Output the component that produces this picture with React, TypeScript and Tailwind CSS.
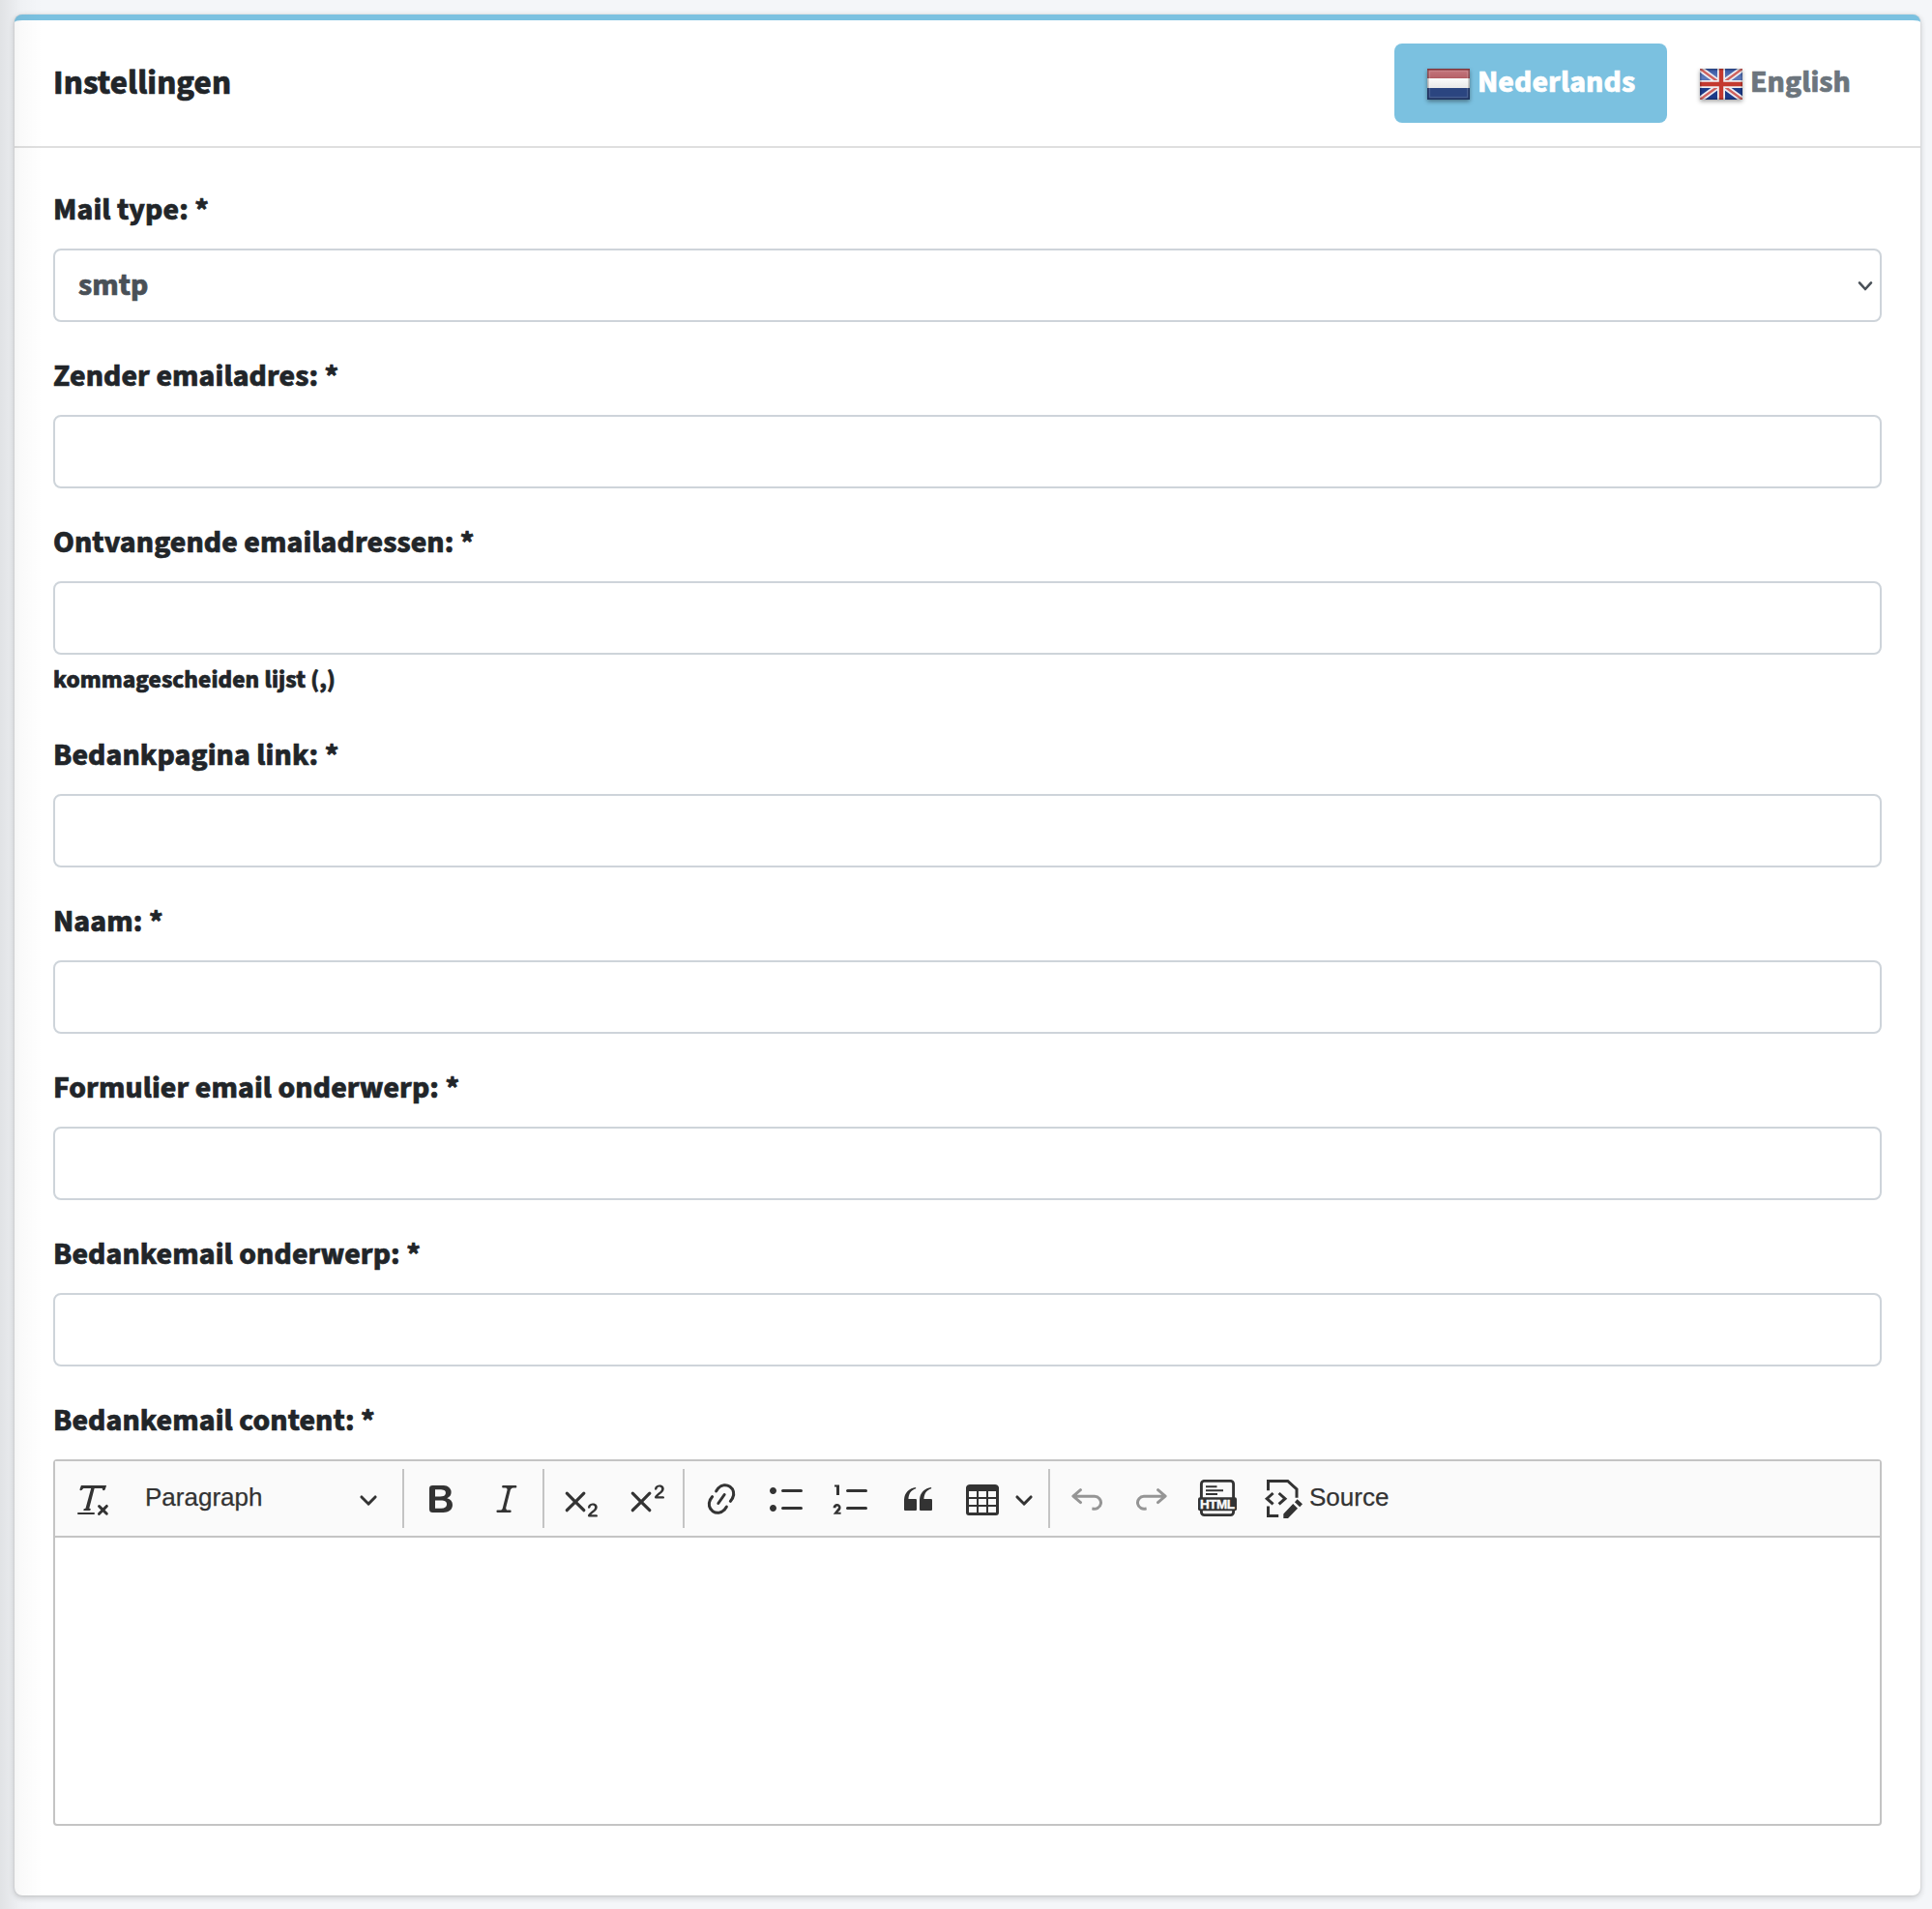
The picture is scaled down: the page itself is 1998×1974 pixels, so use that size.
import type { ReactNode } from "react";

const ICONS = {
  removeFormat:
    "M8.69 14.915c.053.052.173.083.36.093a.366.366 0 0 1 .345.485l-.003.01a.738.738 0 0 1-.697.497h-2.67a.374.374 0 0 1-.353-.496l.013-.038a.681.681 0 0 1 .644-.458c.197-.012.325-.043.386-.093a.28.28 0 0 0 .072-.11L9.592 4.5H6.269c-.359-.017-.609.013-.75.09-.142.078-.289.265-.442.563-.192.29-.516.464-.864.464H4.17a.43.43 0 0 1-.407-.569L4.46 3h13.08l-.62 2.043a.81.81 0 0 1-.775.574h-.114a.486.486 0 0 1-.486-.486c.001-.284-.054-.464-.167-.54-.112-.076-.367-.106-.766-.091h-3.28l-2.68 10.257c-.006.074.007.127.038.158zM3 17h8a.5.5 0 1 1 0 1H3a.5.5 0 1 1 0-1zm11.299 1.17a.75.75 0 1 1-1.06-1.06l1.414-1.415-1.415-1.414a.75.75 0 0 1 1.06-1.06l1.415 1.414 1.414-1.415a.75.75 0 1 1 1.06 1.06l-1.413 1.415 1.414 1.415a.75.75 0 0 1-1.06 1.06l-1.415-1.414-1.414 1.414z",
  bold: "M10.187 17H5.773c-.637 0-1.092-.138-1.364-.415-.273-.277-.409-.718-.409-1.323V4.738c0-.617.14-1.062.419-1.332.279-.27.73-.406 1.354-.406h4.68c.69 0 1.288.041 1.793.124.506.083.96.242 1.36.478.341.197.644.447.906.75a3.262 3.262 0 0 1 .808 2.162c0 1.401-.722 2.426-2.167 3.075C15.05 10.175 16 11.315 16 13.01a3.756 3.756 0 0 1-2.296 3.504 6.1 6.1 0 0 1-1.517.377c-.571.073-1.238.11-2 .11zm-.217-6.217H7v4.087h3.069c1.977 0 2.965-.69 2.965-2.072 0-.707-.256-1.22-.768-1.537-.512-.319-1.277-.478-2.296-.478zM7 5.13v3.619h2.606c.729 0 1.292-.067 1.69-.2a1.6 1.6 0 0 0 .91-.765c.165-.267.247-.566.247-.897 0-.707-.26-1.176-.778-1.409-.519-.232-1.31-.348-2.375-.348H7z",
  italic:
    "m9.586 14.633.021.004c-.036.335.095.655.393.962.082.083.173.15.274.201h1.474a.6.6 0 1 1 0 1.2H5.304a.6.6 0 0 1 0-1.2h1.15c.474-.07.809-.182 1.005-.334.157-.122.291-.32.404-.597l2.416-9.55a1.053 1.053 0 0 0-.281-.823 1.12 1.12 0 0 0-.442-.296H8.15a.6.6 0 0 1 0-1.2h6.443a.6.6 0 1 1 0 1.2h-1.195c-.376.056-.65.155-.823.296-.215.175-.423.439-.623.79l-2.366 9.347z",
  subscript:
    "m7.03 10.349 3.818-3.819a.8.8 0 1 1 1.132 1.132L8.16 11.48l3.819 3.818a.8.8 0 1 1-1.132 1.132L7.03 12.61l-3.818 3.82a.8.8 0 1 1-1.132-1.132L5.9 11.48 2.08 7.662A.8.8 0 1 1 3.212 6.53l3.818 3.82zm8.147 7.829h2.549c.254 0 .447.05.58.152a.49.49 0 0 1 .201.413.54.54 0 0 1-.159.393c-.105.108-.266.162-.48.162h-3.594c-.245 0-.435-.066-.572-.197a.621.621 0 0 1-.205-.463c0-.114.044-.265.132-.453a1.62 1.62 0 0 1 .288-.444c.433-.436.824-.81 1.172-1.122.348-.312.597-.517.747-.615.267-.183.49-.368.667-.553.177-.185.312-.375.405-.57.093-.194.139-.384.139-.57a1.008 1.008 0 0 0-.554-.917 1.197 1.197 0 0 0-.56-.133c-.426 0-.761.182-1.005.546a2.332 2.332 0 0 0-.164.39 1.609 1.609 0 0 1-.258.488c-.096.114-.237.17-.423.17a.558.558 0 0 1-.405-.156.568.568 0 0 1-.161-.427c0-.218.05-.446.151-.683.101-.238.252-.453.452-.646s.454-.349.762-.467a2.998 2.998 0 0 1 1.081-.178c.498 0 .923.076 1.274.228a1.916 1.916 0 0 1 1.004 1.032 1.984 1.984 0 0 1-.156 1.794c-.2.32-.405.572-.613.754-.208.182-.558.468-1.048.857-.49.39-.826.691-1.008.906a2.703 2.703 0 0 0-.24.309z",
  superscript:
    "m7.03 10.349 3.818-3.819a.8.8 0 1 1 1.132 1.132L8.16 11.48l3.819 3.818a.8.8 0 1 1-1.132 1.132L7.03 12.61l-3.818 3.82a.8.8 0 1 1-1.132-1.132L5.9 11.48 2.08 7.662A.8.8 0 1 1 3.212 6.53l3.818 3.82zm8.647-1.671h2.549c.254 0 .447.05.58.152a.49.49 0 0 1 .201.413.54.54 0 0 1-.159.393c-.105.108-.266.162-.48.162h-3.594c-.245 0-.435-.066-.572-.197a.621.621 0 0 1-.205-.463c0-.114.044-.265.132-.453a1.62 1.62 0 0 1 .288-.444c.433-.436.824-.81 1.172-1.122.348-.312.597-.517.747-.615.267-.183.49-.368.667-.553.177-.185.312-.375.405-.57.093-.194.139-.384.139-.57a1.008 1.008 0 0 0-.554-.917 1.197 1.197 0 0 0-.56-.133c-.426 0-.761.182-1.005.546a2.332 2.332 0 0 0-.164.39 1.609 1.609 0 0 1-.258.488c-.096.114-.237.17-.423.17a.558.558 0 0 1-.405-.156.568.568 0 0 1-.161-.427c0-.218.05-.446.151-.683.101-.238.252-.453.452-.646s.454-.349.762-.467a2.998 2.998 0 0 1 1.081-.178c.498 0 .923.076 1.274.228a1.916 1.916 0 0 1 1.004 1.032 1.984 1.984 0 0 1-.156 1.794c-.2.32-.405.572-.613.754-.208.182-.558.468-1.048.857-.49.39-.826.691-1.008.906a2.703 2.703 0 0 0-.24.309z",
  link: "m11.077 15 .991-1.416a.75.75 0 1 1 1.229.86l-1.148 1.64a.748.748 0 0 1-.217.206 5.251 5.251 0 0 1-8.503-5.955.741.741 0 0 1 .12-.274l1.147-1.639a.75.75 0 1 1 1.228.86L4.933 10.7l.006.003a3.75 3.75 0 0 0 6.132 4.294l.006.004zm5.494-5.335a.748.748 0 0 1-.12.274l-1.147 1.639a.75.75 0 1 1-1.228-.86l.86-1.23a3.75 3.75 0 0 0-6.144-4.301l-.86 1.229a.75.75 0 0 1-1.229-.86l1.148-1.64a.748.748 0 0 1 .217-.206 5.251 5.251 0 0 1 8.503 5.955zm-4.563-2.532a.75.75 0 0 1 .184 1.045l-3.155 4.505a.75.75 0 1 1-1.229-.86l3.155-4.506a.75.75 0 0 1 1.045-.184z",
  bulletedList:
    "M7 5.75c0 .414.336.75.75.75h9.5a.75.75 0 1 0 0-1.5h-9.5a.75.75 0 0 0-.75.75zm-6 0C1 4.784 1.777 4 2.75 4c.966 0 1.75.777 1.75 1.75 0 .966-.777 1.75-1.75 1.75C1.784 7.5 1 6.723 1 5.75zm6 9c0 .414.336.75.75.75h9.5a.75.75 0 1 0 0-1.5h-9.5a.75.75 0 0 0-.75.75zm-6 0c0-.966.777-1.75 1.75-1.75.966 0 1.75.777 1.75 1.75 0 .966-.777 1.75-1.75 1.75-.966 0-1.75-.777-1.75-1.75z",
  numberedList:
    "M7 5.75c0 .414.336.75.75.75h9.5a.75.75 0 1 0 0-1.5h-9.5a.75.75 0 0 0-.75.75zM3.5 3v5H2V3.7H1v-1h2.5V3zM.343 17.857l2.59-3.257H2.92a.6.6 0 1 0-1.04 0H.302a2 2 0 1 1 3.995 0h-.001c-.048.405-.16.734-.333.988-.175.254-.59.692-1.244 1.312H4.3v1h-4l.043-.043zM7 14.75a.75.75 0 0 1 .75-.75h9.5a.75.75 0 1 1 0 1.5h-9.5a.75.75 0 0 1-.75-.75z",
  quote:
    "M3 10.423a6.5 6.5 0 0 1 6.056-6.408l.038.67C6.448 5.423 5.354 7.663 5.22 10H9c.552 0 .5.432.5.986v4.511c0 .554-.448.503-1 .503h-5c-.552 0-.5-.449-.5-1.003v-4.574zm8 0a6.5 6.5 0 0 1 6.056-6.408l.038.67c-2.646.739-3.74 2.979-3.873 5.315H17c.552 0 .5.432.5.986v4.511c0 .554-.448.503-1 .503h-5c-.552 0-.5-.449-.5-1.003v-4.574z",
  table:
    "M3 6v3h4V6H3zm0 4v3h4v-3H3zm0 4v3h4v-3H3zm5 3h4v-3H8v3zm5 0h4v-3h-4v3zm4-4v-3h-4v3h4zm0-4V6h-4v3h4zm1.5 8a1.5 1.5 0 0 1-1.5 1.5H3A1.5 1.5 0 0 1 1.5 17V4c.222-.863 1.068-1.5 2-1.5h13c.932 0 1.778.637 2 1.5v13zM12 13v-3H8v3h4zm0-4V6H8v3h4z",
  undo: "m5.042 9.367 2.189 1.837a.75.75 0 0 1-.965 1.149l-3.788-3.18a.747.747 0 0 1-.21-.284.75.75 0 0 1 .17-.945L6.23 4.762a.75.75 0 1 1 .964 1.15L4.863 7.866h8.917A.75.75 0 0 1 14 7.9a4 4 0 1 1-1.477 7.718l.344-1.489a2.5 2.5 0 1 0 1.094-4.73l.008-.032H5.042z",
  redo: "m14.958 9.367-2.189 1.837a.75.75 0 0 0 .965 1.149l3.788-3.18a.747.747 0 0 0 .21-.284.75.75 0 0 0-.17-.945L13.77 4.762a.75.75 0 1 0-.964 1.15l2.331 1.955H6.22A.75.75 0 0 0 6 7.9a4 4 0 1 0 1.477 7.718l-.344-1.489A2.5 2.5 0 1 1 6.039 9.4l-.008-.032h8.927z",
};

function Icon({ name, className = "" }: { name: keyof typeof ICONS; className?: string }) {
  return (
    <svg viewBox="0 0 20 20" className={`size-10 shrink-0 fill-[#333] ${className}`}>
      <path d={ICONS[name]} />
    </svg>
  );
}

function Arrow({ className }: { className: string }) {
  return (
    <svg viewBox="0 0 10 10" className={`size-5 shrink-0 fill-[#333] ${className}`}>
      <path d="M.941 4.523a.75.75 0 1 1 1.06-1.06l3.006 3.005 3.005-3.005a.75.75 0 1 1 1.06 1.06l-3.549 3.55a.75.75 0 0 1-1.168-.136L.941 4.523z" />
    </svg>
  );
}

function Separator({ className }: { className: string }) {
  return <span className={`h-[61px] w-0.5 shrink-0 bg-[#c4c4c4] ${className}`} />;
}

function HtmlIcon({ className }: { className: string }) {
  return (
    <svg viewBox="0 0 40 40" className={`size-10 shrink-0 ${className}`}>
      <rect x="3.4" y="1.4" width="33.2" height="35.2" rx="3" fill="none" stroke="#333" strokeWidth="2.9" />
      <path d="M8 7.3h11.5M8 11.2h18M8 15h12" stroke="#333" strokeWidth="2.1" />
      <rect x="0" y="18.2" width="40" height="14" rx="2" fill="#333" />
      <text x="20" y="29.9" textAnchor="middle" textLength="36" fill="#fafafa" stroke="#fafafa" strokeWidth=".4" className="font-['Liberation_Sans',sans-serif] text-[13.5px] font-bold">
        HTML
      </text>
    </svg>
  );
}

function SourceIcon({ className }: { className: string }) {
  return (
    <svg viewBox="0 0 40 40" className={`size-10 shrink-0 ${className}`}>
      <g fill="none" stroke="#333" strokeWidth="3">
        <path d="M4.5 11.3V1.5h20.2l9.3 8.3v9M4.5 27.5v10.1h10.7" />
        <path d="M9.6 14 3.2 19.7l6.4 5.7M15.6 14l6.4 5.7-6.4 5.7" />
      </g>
      <path d="M20.3 35.6 30.2 25.1l4.8 4.6L25 40h-4.7zM31.9 23.3l2.7-3 5.4 5-2.8 3z" fill="#333" />
    </svg>
  );
}

function DutchFlag() {
  return (
    <svg viewBox="0 0 44 32" className="h-8 w-11 shrink-0 drop-shadow-[0_2px_2px_rgba(0,0,0,0.4)]">
      <defs>
        <linearGradient id="nl-red" x1="0" y1="0" x2="0" y2="1">
          <stop offset="0" stopColor="#a9434b" />
          <stop offset=".25" stopColor="#c27279" />
          <stop offset=".8" stopColor="#b7646b" />
          <stop offset="1" stopColor="#a84950" />
        </linearGradient>
        <linearGradient id="nl-white" x1="0" y1="0" x2="0" y2="1">
          <stop offset="0" stopColor="#fbfbfb" />
          <stop offset="1" stopColor="#e6e6e6" />
        </linearGradient>
      </defs>
      <rect width="44" height="11" fill="url(#nl-red)" />
      <rect y="10" width="44" height="11" fill="url(#nl-white)" />
      <rect y="20" width="44" height="12" fill="#2b4580" />
      <rect x=".8" y=".8" width="42.4" height="30.4" fill="none" stroke="#000" strokeOpacity=".26" strokeWidth="1.6" />
      <rect x="2.4" y="2.4" width="39.2" height="27.2" fill="none" stroke="#fff" strokeOpacity=".14" strokeWidth="1.4" />
    </svg>
  );
}

function BritishFlag() {
  return (
    <svg viewBox="0 0 44 32" className="h-8 w-11 shrink-0 drop-shadow-[0_2px_2px_rgba(0,0,0,0.35)]">
      <defs>
        <linearGradient id="uk-blue" x1="0" y1="0" x2="0" y2="1">
          <stop offset="0" stopColor="#33539f" />
          <stop offset=".3" stopColor="#5e7bbd" />
          <stop offset=".5" stopColor="#4463ab" />
          <stop offset=".55" stopColor="#1b3a88" />
          <stop offset="1" stopColor="#1d3c8c" />
        </linearGradient>
        <clipPath id="uk-clip">
          <rect width="44" height="32" />
        </clipPath>
      </defs>
      <g clipPath="url(#uk-clip)">
        <rect width="44" height="32" fill="url(#uk-blue)" />
        <path d="M0 0l44 32M44 0L0 32" stroke="#ececf2" strokeWidth="6" />
        <path d="M0 0l44 32M44 0L0 32" stroke="#cf625e" strokeWidth="2.4" />
        <path d="M22 0v32M0 16h44" stroke="#efeff2" strokeWidth="8" />
        <path d="M22 0v32M0 16h44" stroke="#c4392f" strokeWidth="4.4" />
        <rect x=".8" y=".8" width="42.4" height="30.4" fill="none" stroke="#000" strokeOpacity=".18" strokeWidth="1.6" />
      </g>
    </svg>
  );
}

const inputClass = "block h-[76px] w-full rounded-lg border-2 border-[#ced4da] bg-white";

function Field({ label, help, children }: { label: string; help?: string; children?: ReactNode }) {
  return (
    <div className="mb-8">
      <label className="mb-4 block h-12">{label} *</label>
      {children ?? <input type="text" className={inputClass} />}
      {help && (
        <div className="h-12">
          <small className="text-[25.6px]">{help}</small>
        </div>
      )}
    </div>
  );
}

export default function App() {
  return (
    <div className="relative h-[1974px] w-[1998px] overflow-hidden bg-[#f4f6f9] pt-[15px] pl-[15px] font-['Source_Sans_3','Source_Sans_Pro','Noto_Sans_CJK_SC',sans-serif] text-[32px] leading-[48px] font-bold tracking-[0.08px] text-[#212529] [-webkit-text-stroke:0.7px_currentColor]">
      <section className="h-[1945px] w-[1971px] rounded-lg border-t-[6px] border-[#7bc1e0] bg-white shadow-[0_0_2px_rgba(0,0,0,0.125),0_2px_6px_rgba(0,0,0,0.2)]">
        <header className="flex h-[132px] items-center justify-between border-b-2 border-[#dfdfdf] px-10">
          <h3 className="text-[35.2px] leading-[53px]">Instellingen</h3>
          <nav className="flex">
            <a className="flex h-[82px] w-[282px] items-start rounded-lg bg-[#7bc1e0] pt-4 pl-[34px] text-white">
              <span className="mt-2.5 mr-2 flex">
                <DutchFlag />
              </span>
              Nederlands
            </a>
            <a className="flex h-[82px] w-[222px] items-start pt-4 pl-[34px] text-[#6c757d]">
              <span className="mt-2.5 mr-2 flex">
                <BritishFlag />
              </span>
              English
            </a>
          </nav>
        </header>
        <form className="px-10 pt-10">
          <Field label="Mail type:">
            <div className="flex h-[76px] w-full items-center justify-between rounded-lg border-2 border-[#ced4da] bg-white pr-[7px] pl-6 text-[#495057]">
              <span className="-mt-px">smtp</span>
              <svg viewBox="0 0 16 12" className="mt-0.5 h-3 w-4" fill="none" stroke="#495057" strokeWidth="2.6" strokeLinecap="round" strokeLinejoin="round">
                <path d="M2 2.4 8 9l6-6.6" />
              </svg>
            </div>
          </Field>
          <Field label="Zender emailadres:" />
          <Field label="Ontvangende emailadressen:" help="kommagescheiden lijst (,)" />
          <Field label="Bedankpagina link:" />
          <Field label="Naam:" />
          <Field label="Formulier email onderwerp:" />
          <Field label="Bedankemail onderwerp:" />
          <Field label="Bedankemail content:">
            <div className="h-[379px] rounded border-2 border-[#c4c4c4] bg-white">
              <div className="flex h-[79px] items-center border-b-2 border-[#c4c4c4] bg-[#fafafa] font-['Liberation_Sans',sans-serif] text-[26px] leading-10 font-normal tracking-normal text-[#333] [-webkit-text-stroke:0.25px_currentColor]">
                <Icon name="removeFormat" className="ml-[18px]" />
                <span className="-mt-1 ml-[35px] w-[221px]">Paragraph</span>
                <Arrow className="" />
                <Separator className="ml-[25px]" />
                <Icon name="bold" className="ml-[18px]" />
                <Icon name="italic" className="ml-7" />
                <Separator className="ml-[17px]" />
                <Icon name="subscript" className="ml-[18px]" />
                <Icon name="superscript" className="ml-7" />
                <Separator className="ml-[17px]" />
                <Icon name="link" className="ml-[18px]" />
                <Icon name="bulletedList" className="ml-7" />
                <Icon name="numberedList" className="ml-[27px]" />
                <Icon name="quote" className="ml-7" />
                <Icon name="table" className="ml-[27px]" />
                <Arrow className="ml-[13px]" />
                <Separator className="ml-[15px]" />
                <Icon name="undo" className="ml-[18px] opacity-50" />
                <Icon name="redo" className="ml-[27px] opacity-50" />
                <HtmlIcon className="ml-7" />
                <SourceIcon className="ml-7" />
                <span className="-mt-1 ml-[7px]">Source</span>
              </div>
            </div>
          </Field>
        </form>
      </section>
      {/* soft shade cast by the sidebar on the left */}
      <div className="pointer-events-none absolute inset-y-0 left-0 w-[44px] bg-linear-to-r from-black/8 via-black/2 to-transparent" />
    </div>
  );
}
